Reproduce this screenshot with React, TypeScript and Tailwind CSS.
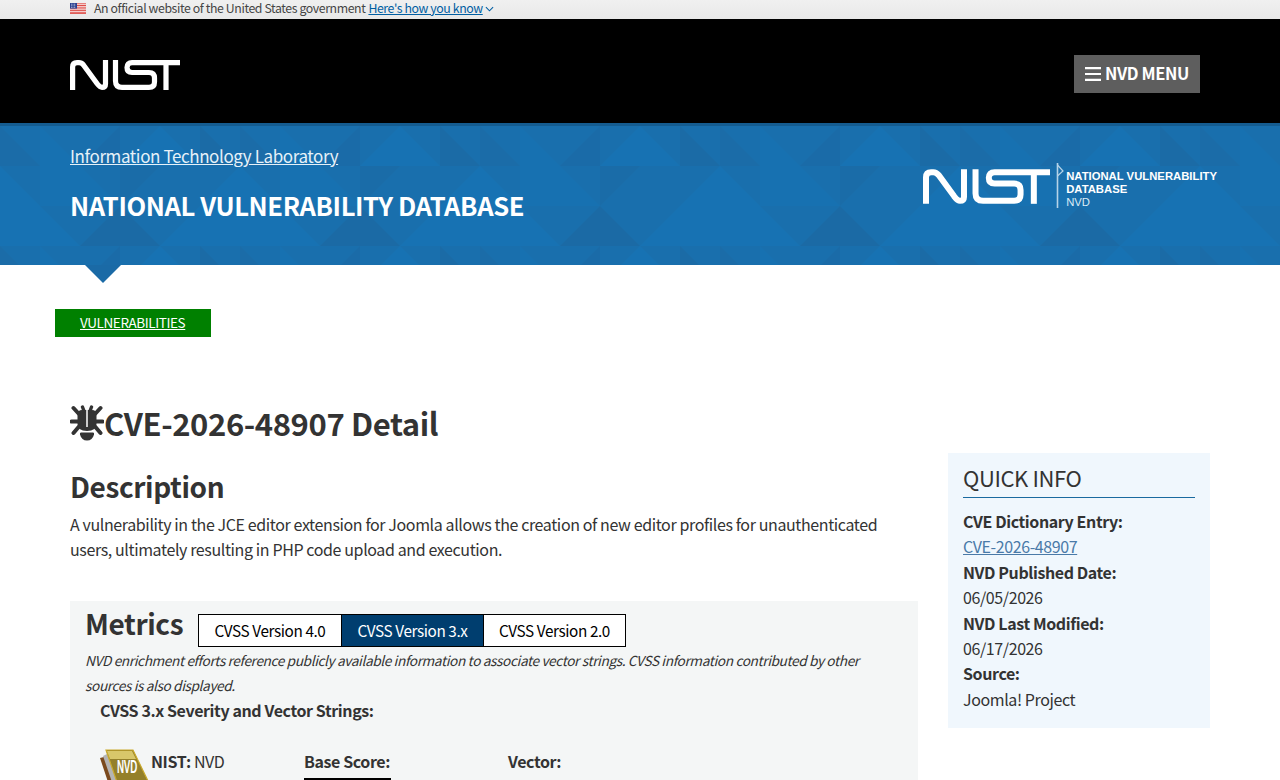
const NistLogo = ({ className }: { className: string }) => (
  <svg viewBox="0 0 110 30" className={className} fill="none" stroke="#fff" strokeWidth="5.2">
    <path d="M2.6 30V7Q2.6 2.6 7 2.6H9Q11.5 2.6 13.5 5L27 23.5Q30 27.4 32 27.4Q35.5 27.4 35.5 24V0" />
    <path d="M45.5 0V21Q45.5 27.4 52 27.4H79Q84.5 27.4 84.5 22V18Q84.5 12.5 79 12.5H62Q57 12.5 57 7.5Q57 2.6 62 2.6H110" />
    <path d="M96 2.6V30" />
  </svg>
);

const Flag = () => (
  <svg viewBox="0 0 16 11" className="h-[11px] w-4">
    <rect width="16" height="11" fill="#fff" />
    <path d="M0 0.8H16M0 2.5H16M0 4.2H16M0 5.9H16M0 7.6H16M0 9.3H16M0 10.6H16" stroke="#d83933" strokeWidth="0.9" />
    <rect width="7" height="5.6" fill="#2a3f8f" />
    <path d="M1 1.2H6M1 2.8H6M1 4.4H6" stroke="#fff" strokeWidth="0.7" strokeDasharray="0.8 0.8" />
  </svg>
);

const BugIcon = () => (
  <svg viewBox="0 0 34 36" className="h-9 w-[34px] shrink-0" fill="#333">
    <path d="M7.5 10Q7.5 5 12 5H22Q26.5 5 26.5 10V19Q26.5 26 17 26Q7.5 26 7.5 19Z" />
    <path d="M11 27.5H23Q24.5 27.5 24 29.5Q22.5 35.5 17 35.5Q11.5 35.5 10 29.5Q9.5 27.5 11 27.5Z" />
    <path d="M9 9L3.5 3M25 9L30.5 3M8 16.5H1.5M26 16.5H32.5M9 21.5L3.5 28M25 21.5L30.5 28" stroke="#333" strokeWidth="4" strokeLinecap="round" />
    <path d="M12.5 2L14 6M21.5 2L20 6" stroke="#333" strokeWidth="3.4" strokeLinecap="round" />
    <path d="M17 2V22" stroke="#fff" strokeWidth="1.5" />
  </svg>
);

const NvdBadge = () => (
  <svg viewBox="0 0 50 36" className="h-9 w-[50px] shrink-0">
    <polygon points="0,9 4,8 16,36 9,36" fill="#7b4a1e" />
    <polygon points="3,7 7,5 20,36 13,36" fill="#b4b4b4" />
    <polygon points="6,1 33,1 50,36 18,36" fill="#94802a" stroke="#c9a92c" strokeWidth="1.2" />
    <polygon points="7,2 32,2 36,10 10,10" fill="#d8c76a" />
    <text x="27" y="24" textAnchor="middle" fill="#fff" fontFamily="'Liberation Sans', sans-serif" fontWeight="700" fontSize="18" textLength="20" lengthAdjust="spacingAndGlyphs">NVD</text>
  </svg>
);

const BannerPattern = () => (
  <svg className="absolute inset-0 h-full w-full" aria-hidden="true">
    <defs>
      <pattern id="tri" width="240" height="120" patternUnits="userSpaceOnUse" y="3">
        <rect width="240" height="120" fill="#196fad" />
        <polygon points="0,0 40,40 0,40" fill="#1b6ca8" />
        <polygon points="40,0 120,80 40,80" fill="#1771b1" />
        <polygon points="120,0 120,40 80,40" fill="#1a6ba8" />
        <polygon points="120,40 200,40 160,0" fill="#1772b3" />
        <polygon points="200,0 240,40 200,40" fill="#1b6ba6" />
        <polygon points="120,40 160,40 120,80" fill="#1a6ca8" />
        <polygon points="160,120 240,40 240,120" fill="#1772b3" />
        <polygon points="0,40 0,120 80,120" fill="#1772b3" />
        <polygon points="80,120 160,120 120,80" fill="#1b6aa5" />
      </pattern>
    </defs>
    <rect width="100%" height="100%" fill="url(#tri)" />
  </svg>
);

const QuickRow = ({ label, children }: { label: string; children: React.ReactNode }) => (
  <>
    <div className="font-bold">{label}</div>
    <div>{children}</div>
  </>
);

export default function App() {
  return (
    <div className="h-[780px] overflow-hidden bg-white font-['Noto_Sans_CJK_SC',sans-serif] text-[16px] leading-[25.4px] tracking-[-0.025em] text-[#333]">
      <div className="flex h-[19px] items-center bg-gradient-to-b from-[#f0f0f0] to-[#e8e8e8] pb-[3px] pl-[70px] text-[12.3px] leading-[16px] text-[#454545]">
        <Flag />
        <span className="ml-2">An official website of the United States government</span>
        <a href="#" className="ml-[3px] text-[#005ea2] underline">Here's how you know </a>
        <svg viewBox="0 0 10 6" className="ml-[2px] mt-[1px] h-[6px] w-[9px]" fill="none" stroke="#005ea2" strokeWidth="1.2">
          <path d="M1 1L5 5L9 1" />
        </svg>
      </div>

      <div className="flex h-[104px] items-center justify-between bg-black pl-[70px] pr-20">
        <NistLogo className="mt-[7px] h-[30px] w-[110px]" />
        <button className="mt-[5px] flex h-[38px] w-[126px] items-center gap-1 bg-[#5e5e5e] pl-[11px] text-[16.5px] font-bold text-white">
          <svg viewBox="0 0 16 14" className="h-[14px] w-4" fill="#fff">
            <path d="M0 0H16V2.2H0ZM0 5.9H16V8.1H0ZM0 11.8H16V14H0Z" />
          </svg>
          NVD MENU
        </button>
      </div>

      <div className="relative h-[142px] overflow-hidden bg-[#196fad]">
        <BannerPattern />
        <div className="absolute inset-x-0 top-0 h-[3px] bg-[#155c90]" />
        <div className="relative flex h-full justify-between pl-[70px] pr-[63px]">
          <div>
            <a href="#" className="mt-[19px] block text-[17px] leading-[27px] text-[#e6f1f8] underline">
              Information Technology Laboratory
            </a>
            <div className="mt-[13px] text-[25.6px] font-bold leading-[45px] text-white">
              NATIONAL VULNERABILITY DATABASE
            </div>
          </div>
          <div className="mt-10 flex h-[46px] items-start">
            <NistLogo className="mt-[6px] h-[35px] w-[127px]" />
            <svg viewBox="0 0 8 46" className="ml-[6px] h-[46px] w-2" fill="none" stroke="#b5d3e8" strokeWidth="1.2">
              <path d="M1.5 0V45" strokeWidth="1.6" />
              <path d="M1.5 2L7 8L1.5 13" />
            </svg>
            <div className="ml-[2px] mt-[7px] font-['Liberation_Sans',sans-serif] text-[11.3px] leading-[12.8px] tracking-normal text-white">
              <div className="font-bold">NATIONAL VULNERABILITY</div>
              <div className="font-bold">DATABASE</div>
              <div className="text-[#dcebf5]">NVD</div>
            </div>
          </div>
        </div>
      </div>

      <svg viewBox="0 0 36 18" className="ml-[85px] h-[18px] w-9">
        <polygon points="0,0 36,0 18,18" fill="#1a6aa6" />
      </svg>

      <div className="ml-[55px] mt-[26px] flex h-7 w-[156px] items-center bg-[#008000] pl-[25px] text-[13.5px] text-white">
        <a href="#" className="underline">VULNERABILITIES</a>
      </div>

      <div className="px-[70px]">
        <h2 className="mt-[68px] flex h-9 items-center text-[31px] font-bold leading-9">
          <BugIcon />
          CVE-2026-48907 Detail
        </h2>
        <div className="flex justify-between">
          <div className="w-[848px]">
            <h3 className="mt-[25px] text-[28px] font-bold leading-[40px]">Description</h3>
            <p className="mt-[6px] leading-[25px] tracking-[-0.024em]">
              A vulnerability in the JCE editor extension for Joomla allows the creation of new editor profiles for
              unauthenticated users, ultimately resulting in PHP code upload and execution.
            </p>
            <div className="mt-[39px] bg-[#f4f6f6] px-[15px] pt-[2px]">
              <div className="flex items-start">
                <h3 className="w-[99px] text-[28px] font-bold leading-[40px]">Metrics</h3>
                <div className="ml-[14px] mt-[11px] flex border border-black text-[15.3px] leading-[31px] text-black">
                  <span className="w-[143px] border-r border-black bg-white text-center">CVSS Version 4.0</span>
                  <span className="w-[142px] border-r border-black bg-[#003e6f] text-center text-white">CVSS Version 3.x</span>
                  <span className="w-[141px] bg-white text-center">CVSS Version 2.0</span>
                </div>
              </div>
              <p className="mt-[1px] text-[13.7px] italic leading-[25px]">
                NVD enrichment efforts reference publicly available information to associate vector strings. CVSS information contributed by other<br />
                sources is also displayed.
              </p>
              <div className="ml-[15px] font-bold">CVSS 3.x Severity and Vector Strings:</div>
              <div className="ml-[15px] mt-[26px] flex">
                <div className="flex w-[204px] items-start">
                  <NvdBadge />
                  <span className="ml-[1px]"><b>NIST:</b> NVD</span>
                </div>
                <div className="w-[204px]">
                  <div className="w-fit border-b-4 border-black pb-[3px] pr-[1px] font-bold">Base Score:</div>
                </div>
                <div className="font-bold">Vector:</div>
              </div>
            </div>
          </div>

          <div className="mt-[12px] h-[275px] w-[262px] bg-[#f0f7fd] px-[15px] pt-[9px]">
            <div className="border-b border-[#1a6a9f] pb-[4px] text-[22px] leading-[31px]">QUICK INFO</div>
            <div className="mt-[11px]">
              <QuickRow label="CVE Dictionary Entry:">
                <a href="#" className="text-[#4a7aa8] underline">CVE-2026-48907</a>
              </QuickRow>
              <QuickRow label="NVD Published Date:">06/05/2026</QuickRow>
              <QuickRow label="NVD Last Modified:">06/17/2026</QuickRow>
              <QuickRow label="Source:">Joomla! Project</QuickRow>
            </div>
          </div>
        </div>
      </div>
    </div>
  );
}
